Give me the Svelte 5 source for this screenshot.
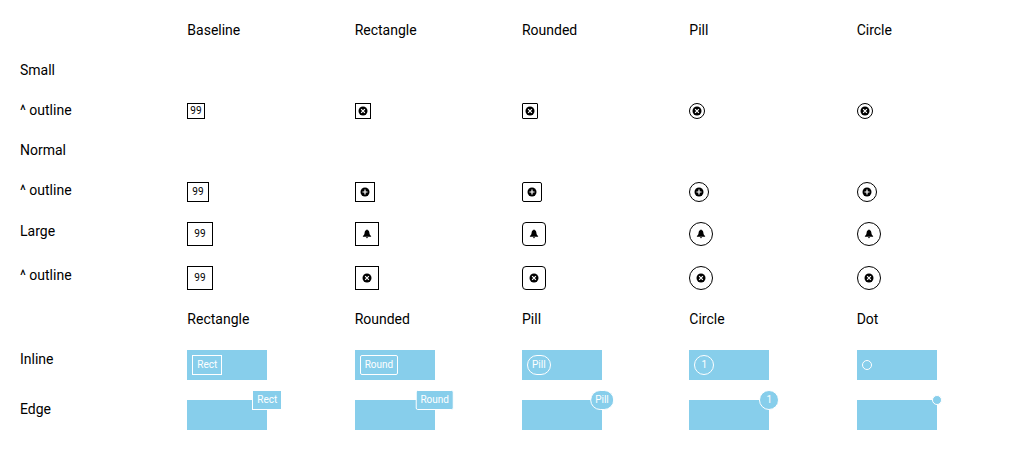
<script>
  const shapes = ['rectangle', 'rounded', 'pill', 'circle'];
  const outlineRows = [
    { label: '^ outline', size: 'small', icon: 'close' },
    { label: 'Normal' },
    { label: '^ outline', size: 'normal', icon: 'plus' },
    { label: 'Large', size: 'large', icon: 'bell' },
    { label: '^ outline', size: 'large', icon: 'close' }
  ];
  const samples = [
    { shape: 'rectangle', text: 'Rect' },
    { shape: 'rounded', text: 'Round' },
    { shape: 'pill', text: 'Pill' },
    { shape: 'circle', text: '1' },
    { shape: 'dot', text: '' }
  ];
</script>

{#snippet glyph(name)}
  <svg class="icon" viewBox="0 0 20 20" aria-hidden="true">
    {#if name === 'bell'}
      <path d="M10 1.200c1 0 1.500.7 1.600 1.500 2 .7 2.900 2.300 3.100 4.300.3 3.200.8 5 3.500 6.800V15.600H1.800V13.800c2.700-1.800 3.200-3.600 3.500-6.800.2-2 1.100-3.600 3.100-4.300.1-.8.6-1.500 1.600-1.500zM7.800 16.500h4.400c-.2 1.300-1 2-2.200 2s-2-.7-2.200-2z" />
    {:else}
      <circle cx="10" cy="10" r="9" />
      {#if name === 'plus'}
        <path class="cut" d="M10 5v10M5 10h10" />
      {:else}
        <path class="cut" d="M6.300 6.300l7.400 7.400M13.700 6.300l-7.400 7.400" />
      {/if}
    {/if}
  </svg>
{/snippet}

{#snippet heading(names)}
  <div class="row">
    <span></span>
    {#each names as name}<span>{name}</span>{/each}
  </div>
{/snippet}

<main>
  {@render heading(['Baseline', 'Rectangle', 'Rounded', 'Pill', 'Circle'])}
  <div class="row"><span>Small</span></div>
  {#each outlineRows as row}
    <div class="row {row.size ?? ''}">
      <span>{row.label}</span>
      {#if row.size}
        <div class="cell"><span class="badge {row.size}">99</span></div>
        {#each shapes as shape}
          <div class="cell">
            <span class="badge only-icon {row.size} {shape}">{@render glyph(row.icon)}</span>
          </div>
        {/each}
      {/if}
    </div>
  {/each}
  {@render heading(['Rectangle', 'Rounded', 'Pill', 'Circle', 'Dot'])}
  <div class="row blocks">
    <span>Inline</span>
    {#each samples as sample}
      <div class="cell">
        <div class="block inline">
          <span class="badge normal {sample.shape}">{sample.text}</span>
        </div>
      </div>
    {/each}
  </div>
  <div class="row blocks">
    <span>Edge</span>
    {#each samples as sample}
      <div class="cell">
        <div class="block">
          <span class="badge normal edge {sample.shape}">{sample.text}</span>
        </div>
      </div>
    {/each}
  </div>
</main>

<style>
  :global(body) {
    margin: 0;
    background: #fff;
  }
  main {
    padding: 10px 0 10px 20px;
    font: 14px/20px Roboto, sans-serif;
    color: #000;
  }
  .row {
    display: grid;
    grid-template-columns: repeat(6, 1fr);
    align-items: start;
    padding: 10px 0;
  }
  .row.normal,
  .row.large,
  .row.blocks {
    padding-bottom: 9px;
  }
  .cell {
    display: flex;
    padding-top: 1px;
  }
  .row.small .cell {
    padding-top: 3px;
  }
  .row.normal .cell {
    padding-top: 2px;
  }
  .badge {
    box-sizing: border-box;
    display: flex;
    justify-content: center;
    border: 1px solid currentColor;
    font-size: 10px;
  }
  .badge.small {
    height: 16px;
    min-width: 16px;
    padding: 0 2px;
    line-height: 14px;
  }
  .badge.normal {
    height: 20px;
    min-width: 20px;
    padding: 0 4px;
    line-height: 18px;
  }
  .badge.large {
    height: 24px;
    min-width: 24px;
    padding: 0 6px;
    line-height: 22px;
  }
  .badge.only-icon {
    align-items: center;
  }
  .icon {
    width: 10px;
    height: 10px;
    fill: currentColor;
  }
  .cut {
    fill: none;
    stroke: #fff;
    stroke-width: 2.400;
  }
  .rounded.small {
    border-radius: 1px;
  }
  .rounded.normal {
    border-radius: 2px;
  }
  .rounded.large {
    border-radius: 4px;
  }
  .pill {
    border-radius: 12px;
  }
  .circle {
    border-radius: 50%;
  }
  .block {
    position: relative;
    box-sizing: border-box;
    width: 80px;
    height: 30px;
    background: skyblue;
    color: #fff;
  }
  .block.inline {
    display: flex;
    align-items: center;
    padding: 0 5px;
  }
  .badge.dot {
    width: 10px;
    min-width: 0;
    height: 10px;
    padding: 0;
    border-radius: 50%;
  }
  .edge {
    position: absolute;
    top: 0;
    left: 100%;
    transform: translate(-50%, -50%);
    background: skyblue;
  }
</style>
